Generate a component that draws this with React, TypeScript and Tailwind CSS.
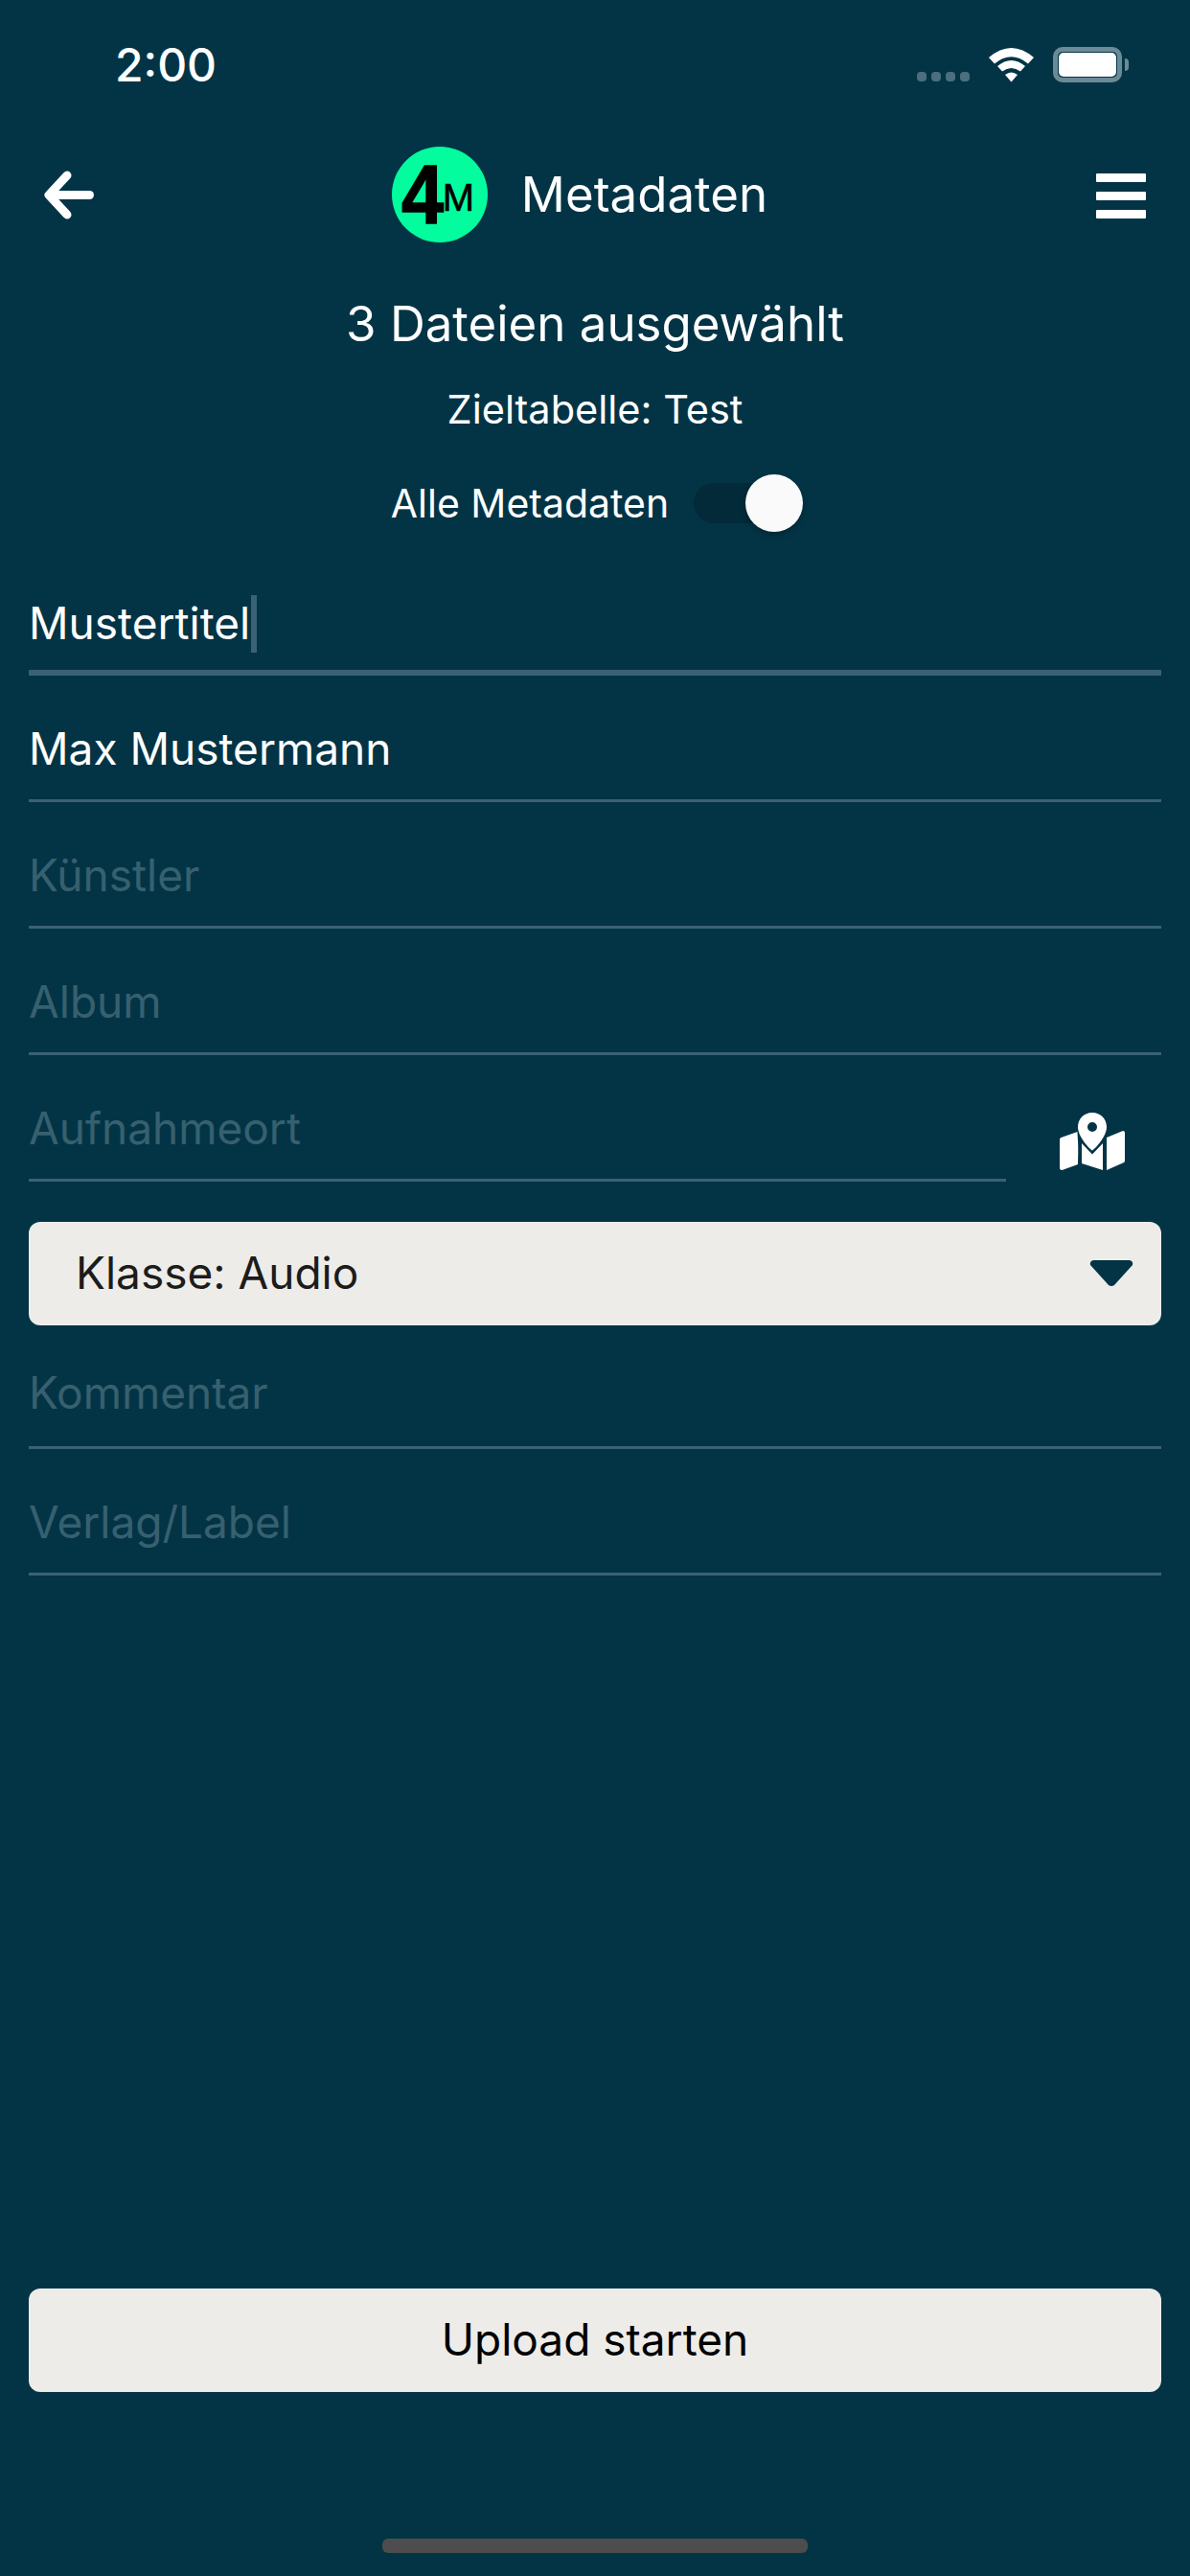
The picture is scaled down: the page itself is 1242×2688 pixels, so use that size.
function StatusBar() {
  return (
    <div className="h-[138px] pl-[120px] pr-[64px] pt-[39px] flex justify-between items-start">
      <span className="text-[48px] leading-[58px] font-medium text-white">2:00</span>
      <div className="flex items-start">
        <div className="flex gap-[5px] mt-[36px] mr-[20px]">
          <span className="w-[10px] h-[10px] rounded-[4px] bg-[#4b6f7e]"></span>
          <span className="w-[10px] h-[10px] rounded-[4px] bg-[#4b6f7e]"></span>
          <span className="w-[10px] h-[10px] rounded-[4px] bg-[#4b6f7e]"></span>
          <span className="w-[10px] h-[10px] rounded-[4px] bg-[#4b6f7e]"></span>
        </div>
        <svg width="48" height="36" viewBox="0 0 48 36" className="mt-[11px] mr-[19px]" fill="#ffffff">
          <path d="M0 10 Q23.5 -10 47 10 L41 16.5 Q23.5 2 6 16.5 Z" />
          <path d="M9 19 Q23.5 7 38 19 L33 24.5 Q23.5 17.5 14 24.5 Z" />
          <path d="M17 28 Q23.5 23 30 28 L23.5 35.5 Z" />
        </svg>
        <div className="mt-[10px] w-[72px] h-[37px] border-[5px] border-[#6b8a97] rounded-[10px] p-px">
          <div className="w-full h-full bg-white rounded-[5px]"></div>
        </div>
        <div className="mt-[22px] ml-[3px] w-[4px] h-[13px] bg-[#6b8a97] rounded-r-[4px]"></div>
      </div>
    </div>
  );
}

function Logo() {
  return (
    <div className="relative w-[100px] h-[100px] rounded-full bg-[#03fd9e] text-black [font-family:'Liberation_Sans',Arial,sans-serif]">
      <span className="absolute left-[10px] top-0 origin-left scale-x-[0.9] text-[88px] leading-[100px] font-bold [-webkit-text-stroke:1.5px_black]">4</span>
      <span className="absolute left-[53px] top-[30px] text-[40px] leading-[46px] [-webkit-text-stroke:0.6px_black]">M</span>
    </div>
  );
}

function Toolbar() {
  return (
    <div className="relative h-[130px] flex items-center justify-center">
      <svg className="absolute left-[46px] top-[40px]" width="52" height="51" viewBox="0 0 52 51" fill="none" stroke="#ffffff" strokeWidth="9" strokeLinecap="round" strokeLinejoin="round">
        <path d="M47.5 25.5 H8" />
        <path d="M24 5 L5 25.5 L24 46" />
      </svg>
      <div className="flex items-center gap-[35px] pr-[32px]">
        <Logo />
        <span className="text-[51px] leading-[62px] text-white">Metadaten</span>
      </div>
      <div className="absolute left-[1144px] top-[43px] w-[52px] flex flex-col gap-[10px]">
        <span className="h-[9px] bg-white rounded-[1px]"></span>
        <span className="h-[9px] bg-white rounded-[1px]"></span>
        <span className="h-[9px] bg-white rounded-[1px]"></span>
      </div>
    </div>
  );
}

function Field({ label, value, active, raised }: { label?: string; value?: string; active?: boolean; raised?: boolean }) {
  const line = active ? "border-b-[6px] pb-[21px]" : raised ? "border-b-[3px] pb-[28px]" : "border-b-[3px] pb-[25px]";
  return (
    <div className={`h-[132px] flex items-end border-[#3a6174] ${line}`}>
      <span className={`text-[46px] leading-[56px] ${value ? "text-white" : "text-[#37606f]"}`}>{value ?? label}</span>
      {active && <span className="w-[6px] h-[60px] ml-px mb-[-3px] bg-[#3a6174]"></span>}
    </div>
  );
}

function MapIcon() {
  return (
    <svg width="68" height="60" viewBox="0 0 68 60" fill="#ffffff">
      <path fillRule="evenodd" d="M34 0 C42.5 0 49 6.5 49 15 C49 24 39 36 34 39.5 C29 36 19 24 19 15 C19 6.5 25.5 0 34 0 Z M34 10 A5 5 0 1 0 34 20 A5 5 0 1 0 34 10 Z" />
      <path d="M1.5 26 L18.5 20 C18.5 26 20 31 19 54 L2.5 60 Q0 60 0 58 L0 28 Q0 26.5 1.5 26 Z" />
      <path d="M23 32 L34 43.5 L45 32 L45 60 L23 53 Z" />
      <path d="M49 26 L66 19 Q68 19 68 21 L68 50 Q68 52 66 52.5 L49 60 Z" />
    </svg>
  );
}

export default function App() {
  return (
    <div className="w-[1242px] h-[2688px] flex flex-col bg-[#033446] [font-family:Inter,sans-serif]">
      <StatusBar />
      <Toolbar />

      {/* Selection summary */}
      <div className="flex flex-col items-center text-white mt-[40px]">
        <div className="text-[51px] leading-[60px]">3 Dateien ausgewählt</div>
        <div className="text-[41.5px] leading-[50px] mt-[34px]">Zieltabelle: Test</div>
        <div className="flex items-center mt-[43px] pl-[4px]">
          <span className="text-[41px] leading-[50px]">Alle Metadaten</span>
          <div className="relative w-[114px] h-[60px] ml-[26px]">
            <div className="absolute left-0 top-[9px] w-[80px] h-[42px] rounded-full bg-[#022a39]"></div>
            <div className="absolute left-[54px] top-0 w-[60px] h-[60px] rounded-full bg-[#fafafa] shadow-[0_3px_6px_rgba(0,0,0,0.25)]"></div>
          </div>
        </div>
      </div>

      {/* Form */}
      <div className="flex flex-col px-[30px] mt-[18px]">
        <Field value="Mustertitel" active />
        <Field value="Max Mustermann" />
        <Field label="Künstler" />
        <Field label="Album" />
        <div className="flex items-start">
          <div className="w-[1020px]">
            <Field label="Aufnahmeort" />
          </div>
          <div className="mt-[60px] ml-[56px]">
            <MapIcon />
          </div>
        </div>
        <div className="mt-[42px] h-[108px] rounded-[12px] bg-[#edece9] flex items-center justify-between pl-[49px] pr-[29px]">
          <span className="text-[46px] leading-[56px] pb-[3px] text-[#1c1c1c]">Klasse: Audio</span>
          <svg width="46" height="28" viewBox="0 0 46 28" fill="#033446">
            <path d="M4 0 H42 Q46 1 45 5 L26 26 Q23 28 20 26 L1 5 Q0 1 4 0 Z" />
          </svg>
        </div>
        <div className="-mt-[3px]">
          <Field label="Kommentar" raised />
        </div>
        <Field label="Verlag/Label" />
      </div>

      {/* Bottom action */}
      <div className="mt-auto px-[30px]">
        <div className="h-[108px] rounded-[12px] bg-[#edece9] flex items-center justify-center text-[46px] leading-[56px] pb-[2px] text-black">
          Upload starten
        </div>
        <div className="w-[444px] h-[15px] mx-auto mt-[153px] mb-[24px] rounded-[6px] bg-[#4d4d4d]"></div>
      </div>
    </div>
  );
}
